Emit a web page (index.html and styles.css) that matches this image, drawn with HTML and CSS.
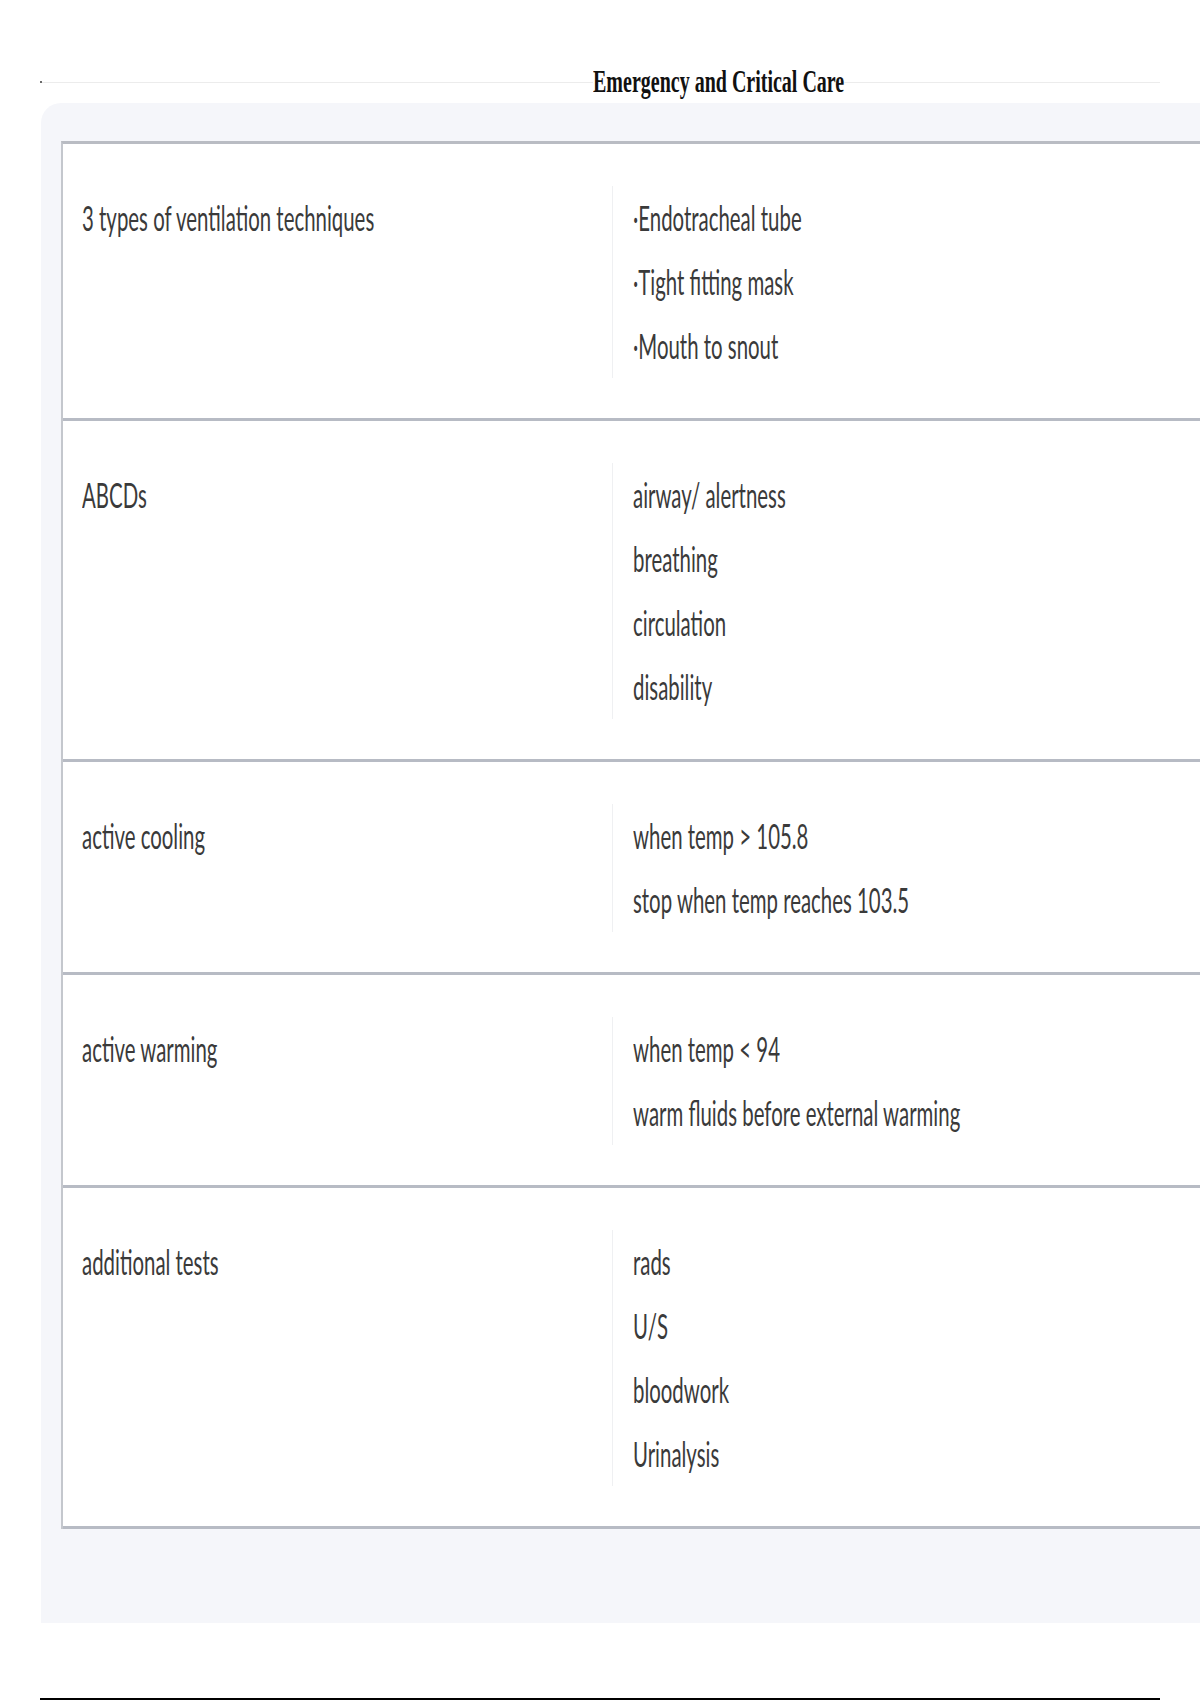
FILE: index.html
```html
<!DOCTYPE html>
<html lang="en">
<head>
<meta charset="utf-8">
<title>Emergency and Critical Care</title>
<link rel="stylesheet" href="styles.css">
</head>
<body>
<header class="header">
  <h1 class="title">Emergency and Critical Care</h1>
</header>
<main class="panel">
  <div class="table">
    <div class="row">
      <div class="cell term"><div class="line">3 types of ventilation techniques</div></div>
      <div class="cell def">
        <div class="line">·Endotracheal tube</div>
        <div class="line">·Tight fitting mask</div>
        <div class="line">·Mouth to snout</div>
      </div>
    </div>
    <div class="row">
      <div class="cell term"><div class="line">ABCDs</div></div>
      <div class="cell def">
        <div class="line">airway/ alertness</div>
        <div class="line">breathing</div>
        <div class="line">circulation</div>
        <div class="line">disability</div>
      </div>
    </div>
    <div class="row">
      <div class="cell term"><div class="line">active cooling</div></div>
      <div class="cell def">
        <div class="line">when temp &gt; 105.8</div>
        <div class="line">stop when temp reaches 103.5</div>
      </div>
    </div>
    <div class="row">
      <div class="cell term"><div class="line">active warming</div></div>
      <div class="cell def">
        <div class="line">when temp &lt; 94</div>
        <div class="line">warm fluids before external warming</div>
      </div>
    </div>
    <div class="row">
      <div class="cell term"><div class="line">additional tests</div></div>
      <div class="cell def">
        <div class="line">rads</div>
        <div class="line">U/S</div>
        <div class="line">bloodwork</div>
        <div class="line">Urinalysis</div>
      </div>
    </div>
  </div>
</main>
<footer class="footer"></footer>
</body>
</html>
```
FILE: styles.css
```css
html, body {
  margin: 0;
  padding: 0;
  background: #ffffff;
  overflow: hidden;
}
body {
  width: 1200px;
  height: 1700px;
  font-family: Lato, "Open Sans", sans-serif;
  color: #3a3a3a;
}
.header {
  margin: 0 40px;
  padding-top: 61px;
  height: 42px;
  background:
    linear-gradient(#6a6a6a, #6a6a6a) no-repeat 0 81px / 2px 2px,
    linear-gradient(#ececec, #ececec) no-repeat 0 82px / 100% 1px;
}
.title {
  margin: 0 0 0 553px;
  display: inline-block;
  font-family: "Liberation Serif", "Times New Roman", serif;
  font-weight: bold;
  font-size: 32px;
  line-height: 40px;
  color: #111111;
  background: #ffffff;
  white-space: nowrap;
  transform: scaleX(0.625);
  transform-origin: left center;
}
.panel {
  display: block;
  margin-left: 41px;
  background: #f5f6fa;
  border-top-left-radius: 20px;
  padding: 38px 0 94px 20px;
}
.table {
  width: 1200px;
  background: #ffffff;
  border-left: 2px solid #c4c7cd;
  border-top: 3px solid #b9bcc3;
}
.row {
  display: grid;
  grid-template-columns: 549px 1fr;
  padding: 42px 0 40px;
  border-bottom: 3px solid #b7bbc4;
}
.cell {
  min-width: 0;
}
.term {
  padding-left: 19px;
}
.def {
  border-left: 1px solid #eff0f2;
  padding-left: 20px;
}
.line {
  font-size: 34px;
  line-height: 64px;
  white-space: nowrap;
  transform: scaleX(0.6);
  transform-origin: left center;
}
.footer {
  margin: 75px 40px 0;
  height: 10px;
  background: #000000;
}
```
